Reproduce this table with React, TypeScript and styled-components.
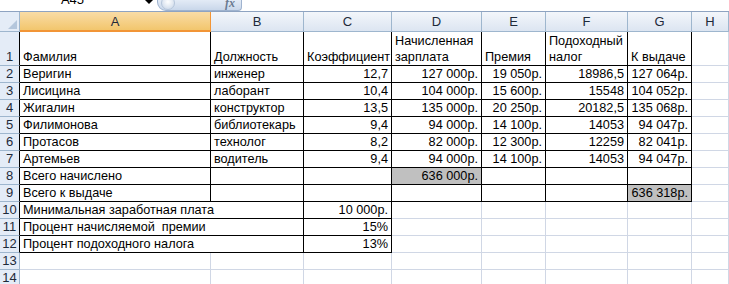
import React from 'react';
import styled, { createGlobalStyle, css } from 'styled-components';

const GlobalStyle = createGlobalStyle`
    html, body {
        margin: 0;
        padding: 0;
        background: #ffffff;
    }
    body {
        font-family: 'Liberation Sans', Arial, sans-serif;
        font-size: 12.7px;
        color: #000000;
    }
`;

const BLACK = '#000000';
const GRID = '#d0d7e5';
const HEAD_LINE = '#9eb6ce';

const COLS = [20, 191, 93, 88, 90, 64, 82, 64, 37];
const LETTERS = ['A', 'B', 'C', 'D', 'E', 'F', 'G', 'H'];

const Window = styled.div`
    width: 729px;
    height: 284px;
    overflow: hidden;
    display: flex;
    flex-direction: column;
`;

const FormulaBar = styled.div`
    height: 11px;
    flex-shrink: 0;
    display: flex;
    align-items: stretch;
    border-bottom: 1px solid #8ea3c1;
    overflow: hidden;
`;

const NameBox = styled.div`
    width: 137px;
    display: flex;
    justify-content: center;
    padding-left: 4px;
    font-size: 13px;
    line-height: 16px;
    margin-top: -8px;
`;

const DropArrow = styled.div`
    width: 16px;
    display: flex;
    justify-content: center;

    &::after {
        content: '';
        width: 0;
        height: 0;
        border-left: 4px solid transparent;
        border-right: 4px solid transparent;
        border-top: 4px solid #000;
    }
`;

const FxButton = styled.div`
    width: 85px;
    display: flex;
    align-items: center;
    justify-content: space-between;
    padding: 0 6px 0 3px;
    box-sizing: border-box;
    background: linear-gradient(#e3ebf6, #c9d7ea);
    border: 1px solid #9fb3cf;
    border-top: none;
    border-radius: 0 0 4px 9px;
`;

const Knob = styled.span`
    width: 12px;
    height: 12px;
    margin-top: -5px;
    border-radius: 50%;
    background: radial-gradient(circle at 50% 40%, #ffffff, #d7e1ee 70%);
    border: 1px solid #b5c5da;
`;

const Fx = styled.span`
    font-family: 'Liberation Serif', 'Times New Roman', serif;
    font-style: italic;
    font-weight: bold;
    font-size: 12px;
    line-height: 10px;
    margin-top: -5px;
    color: #6a7a90;
`;

const FormulaInput = styled.div`
    flex: 1;
`;

const Sheet = styled.div`
    display: grid;
    grid-template-columns: ${COLS.map(w => `${w}px`).join(' ')};
    grid-auto-rows: 17px;
    grid-template-rows: 20px 34px;
`;

const Corner = styled.div`
    background: #e4ecf7;
    border-right: 1px solid ${HEAD_LINE};
    border-bottom: 1px solid ${HEAD_LINE};
    display: flex;
    align-items: flex-end;
    justify-content: flex-end;
    padding: 0 2px 2px 0;

    &::after {
        content: '';
        width: 0;
        height: 0;
        border-left: 9px solid transparent;
        border-bottom: 9px solid #b4c6dc;
    }
`;

const ColHead = styled.div<{ $active?: boolean }>`
    display: flex;
    align-items: center;
    justify-content: center;
    font-size: 13px;
    color: #1e2a3a;
    border-right: 1px solid ${HEAD_LINE};
    border-bottom: 1px solid ${HEAD_LINE};
    background: linear-gradient(#f3f6fb, #dce5f1);
    ${p =>
        p.$active &&
        css`
            background: linear-gradient(#f9dca6, #f2c66d);
            border-right-color: #f29536;
            border-bottom: 2px solid #f29536;
        `}
`;

const RowHead = styled.div<{ $line: string }>`
    display: flex;
    align-items: flex-end;
    justify-content: center;
    font-size: 13px;
    line-height: 16px;
    color: #1e2a3a;
    background: #e4ecf7;
    border-bottom: 1px solid ${HEAD_LINE};
    border-right: 1px solid ${p => p.$line};
`;

const Cell = styled.div<{
    $right: string;
    $bottom: string;
    $num?: boolean;
    $fill?: string;
    $span?: number;
}>`
    display: flex;
    align-items: flex-end;
    justify-content: ${p => (p.$num ? 'flex-end' : 'flex-start')};
    padding: 0 3px 0 3px;
    min-width: 0;
    white-space: pre;
    line-height: 16px;
    border-right: 1px solid ${p => p.$right};
    border-bottom: 1px solid ${p => p.$bottom};
    background: ${p => p.$fill || 'transparent'};
    ${p => p.$span && `grid-column: span ${p.$span};`}
`;

type CellData = { t?: string; num?: boolean; fill?: string; span?: number };

const GREY = '#c0c0c0';

const n = (t: string, fill?: string): CellData => ({ t, num: true, fill });
const s = (t?: string): CellData => ({ t });

const people: [string, string, string, string, string, string, string][] = [
    ['Веригин', 'инженер', '12,7', '127 000р.', '19 050р.', '18986,5', '127 064р.'],
    ['Лисицина', 'лаборант', '10,4', '104 000р.', '15 600р.', '15548', '104 052р.'],
    ['Жигалин', 'конструктор', '13,5', '135 000р.', '20 250р.', '20182,5', '135 068р.'],
    ['Филимонова', 'библиотекарь', '9,4', '94 000р.', '14 100р.', '14053', '94 047р.'],
    ['Протасов', 'технолог', '8,2', '82 000р.', '12 300р.', '12259', '82 041р.'],
    ['Артемьев', 'водитель', '9,4', '94 000р.', '14 100р.', '14053', '94 047р.'],
];

const empty = (k: number) => Array.from({ length: k }, () => s());

const sheetRows: CellData[][] = [
    [
        s('Фамилия'),
        s('Должность'),
        s('Коэффициент'),
        s('Начисленная\nзарплата'),
        s('Премия'),
        s('Подоходный\nналог'),
        s('К выдаче'),
        s(),
    ],
    ...people.map(p => [s(p[0]), s(p[1]), n(p[2]), n(p[3]), n(p[4]), n(p[5]), n(p[6]), s()]),
    [s('Всего начислено'), s(), s(), n('636 000р.', GREY), s(), s(), s(), s()],
    [s('Всего к выдаче'), s(), s(), s(), s(), s(), n('636 318р.', GREY), s()],
    [{ t: 'Минимальная заработная плата', span: 2 }, n('10 000р.'), ...empty(5)],
    [{ t: 'Процент начисляемой  премии', span: 2 }, n('15%'), ...empty(5)],
    [{ t: 'Процент подоходного налога', span: 2 }, n('13%'), ...empty(5)],
    empty(8),
    empty(8),
];

// bordered block: A1:G9 and A10:C12 (row index 0-based)
const boxed = (r: number, c: number) => {
    if (r >= 0 && r <= 8) return c >= 0 && c <= 6;
    if (r >= 9 && r <= 11) return c >= 0 && c <= 2;
    return false;
};

const App = () => (
    <Window>
        <GlobalStyle />
        <FormulaBar>
            <NameBox>A45</NameBox>
            <DropArrow />
            <FxButton>
                <Knob />
                <Fx>fx</Fx>
            </FxButton>
            <FormulaInput />
        </FormulaBar>
        <Sheet>
            <Corner />
            {LETTERS.map(l => (
                <ColHead key={l} $active={l === 'A'}>
                    {l}
                </ColHead>
            ))}
            {sheetRows.map((row, r) => {
                let col = 0;
                return (
                    <React.Fragment key={r}>
                        <RowHead $line={boxed(r, 0) ? BLACK : HEAD_LINE}>{r + 1}</RowHead>
                        {row.map((cell, i) => {
                            const c = col;
                            const last = c + (cell.span || 1) - 1;
                            col = last + 1;
                            const right = boxed(r, last) || boxed(r, last + 1) ? BLACK : GRID;
                            const bottom = boxed(r, c) || boxed(r + 1, c) ? BLACK : GRID;
                            return (
                                <Cell
                                    key={i}
                                    $right={right}
                                    $bottom={bottom}
                                    $num={cell.num}
                                    $fill={cell.fill}
                                    $span={cell.span}
                                >
                                    {cell.t}
                                </Cell>
                            );
                        })}
                    </React.Fragment>
                );
            })}
        </Sheet>
    </Window>
);

export default App;
